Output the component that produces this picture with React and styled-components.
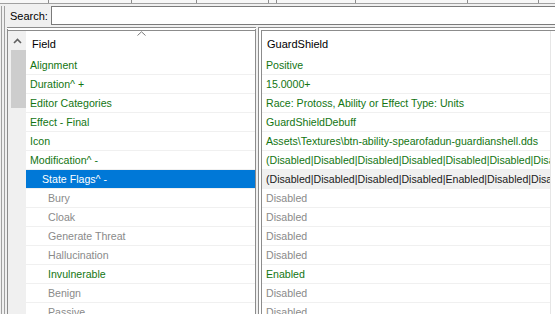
import React from "react";
import styled, { createGlobalStyle } from "styled-components";

const GlobalStyle = createGlobalStyle`
    html, body {
        margin: 0;
        padding: 0;
        background: #f0f0f0;
    }
`;

const Window = styled.div`
    width: 555px;
    height: 314px;
    overflow: hidden;
    background: #f0f0f0;
    font-family: "Liberation Sans", Arial, sans-serif;
    font-size: 10.6px;
    display: flex;
    flex-direction: column;
`;

const TopStrip = styled.div`
    height: 3px;
    flex: none;
    display: flex;
    border-bottom: 1px solid #a0a0a0;
    background: #f7f7f7;
`;

const TopCell = styled.div`
    width: ${(p) => p.w}px;
    flex: none;
    border-right: 1px solid #8c8c8c;
`;

const Frame = styled.div`
    flex: 1;
    margin-left: 1px;
    margin-top: 2px;
    border-left: 4px double #a0a0a0;
    display: flex;
    flex-direction: column;
    min-height: 0;
`;

const SearchRow = styled.div`
    height: 19px;
    flex: none;
    display: flex;
    align-items: center;
`;

const SearchLabel = styled.span`
    padding-left: 5px;
    width: 41px;
    flex: none;
    color: #000;
    font-size: 11px;
`;

const SearchInput = styled.div`
    flex: 1;
    height: 17px;
    margin-right: -4px;
    background: #fff;
    border: 1px solid #7a7a7a;
`;

const Panes = styled.div`
    flex: 1;
    display: flex;
    margin-top: 2px;
    min-height: 0;
    overflow: hidden;
`;

const LeftPane = styled.div`
    width: 247px;
    flex: none;
    margin-left: 2px;
    border-top: 4px double #8c8c8c;
    border-left: 1px solid #8c8c8c;
    border-right: 1px solid #8c8c8c;
    background: #fff;
    display: flex;
    overflow: hidden;
`;

const RightPane = styled.div`
    flex: 1;
    margin-left: 2px;
    border-top: 4px double #8c8c8c;
    border-left: 4px double #8c8c8c;
    background: #fff;
    display: flex;
    flex-direction: column;
    overflow: hidden;
`;

const ScrollBar = styled.div`
    width: 18px;
    flex: none;
    background: #f0f0f0;
    display: flex;
    flex-direction: column;
    align-items: center;
`;

const ScrollArrow = styled.div`
    height: 19px;
    flex: none;
    width: 100%;
    display: flex;
    align-items: center;
    justify-content: center;
`;

const Thumb = styled.div`
    width: 15px;
    height: 58px;
    flex: none;
    margin-left: 2px;
    background: #cdcdcd;
`;

const Tree = styled.div`
    flex: 1;
    display: flex;
    flex-direction: column;
    min-width: 0;
`;

const Header = styled.div`
    position: relative;
    height: 25px;
    flex: none;
    display: flex;
    align-items: center;
    padding-left: ${(p) => p.pad}px;
    color: #000;
    font-size: 11px;
`;

const SortMark = styled.svg`
    position: absolute;
    left: 111px;
    top: 0;
`;

const Row = styled.div`
    height: 18px;
    flex: none;
    border-bottom: 1px solid #f0f0f0;
    display: flex;
    align-items: center;
    white-space: nowrap;
    overflow: hidden;
    padding-left: ${(p) => p.indent}px;
    color: ${(p) => (p.selected ? "#fff" : p.tone === "green" ? "#127512" : p.tone === "gray" ? "#8a8a8a" : "#1a1a1a")};
    background: ${(p) => (p.selected ? "#0078d7" : "transparent")};
`;

const ValueList = styled.div`
    width: 288px;
    border-right: 1px solid #e6e6e6;
    display: flex;
    flex-direction: column;
    flex: 1;
`;

const ValueRow = styled(Row)`
    background: ${(p) => (p.current ? "#f0f0f0" : "transparent")};
`;

const rows = [
    { field: "Alignment", value: "Positive", tone: "green", indent: 4 },
    { field: "Duration^ +", value: "15.0000+", tone: "green", indent: 4 },
    { field: "Editor Categories", value: "Race: Protoss, Ability or Effect Type: Units", tone: "green", indent: 4 },
    { field: "Effect - Final", value: "GuardShieldDebuff", tone: "green", indent: 4 },
    { field: "Icon", value: "Assets\\Textures\\btn-ability-spearofadun-guardianshell.dds", tone: "green", indent: 4 },
    { field: "Modification^ -", value: "(Disabled|Disabled|Disabled|Disabled|Disabled|Disabled|Disa", tone: "green", indent: 4 },
    { field: "State Flags^ -", value: "(Disabled|Disabled|Disabled|Disabled|Enabled|Disabled|Disal", tone: "dark", indent: 16, selected: true },
    { field: "Bury", value: "Disabled", tone: "gray", indent: 22 },
    { field: "Cloak", value: "Disabled", tone: "gray", indent: 22 },
    { field: "Generate Threat", value: "Disabled", tone: "gray", indent: 22 },
    { field: "Hallucination", value: "Disabled", tone: "gray", indent: 22 },
    { field: "Invulnerable", value: "Enabled", tone: "green", indent: 22 },
    { field: "Benign", value: "Disabled", tone: "gray", indent: 22 },
    { field: "Passive", value: "Disabled", tone: "gray", indent: 22 },
];

const topCells = [48, 82, 64, 71, 7, 78, 111, 70];

function App() {
    return (
        <Window>
            <GlobalStyle />
            <TopStrip>
                {topCells.map((w, i) => <TopCell key={i} w={w} />)}
            </TopStrip>
            <Frame>
                <SearchRow>
                    <SearchLabel>Search:</SearchLabel>
                    <SearchInput />
                </SearchRow>
                <Panes>
                    <LeftPane>
                        <ScrollBar>
                            <ScrollArrow>
                                <svg width="9" height="6" viewBox="0 0 9 6">
                                    <path d="M1 5 L4.5 1.5 L8 5" fill="none" stroke="#606060" strokeWidth="1.6" />
                                </svg>
                            </ScrollArrow>
                            <Thumb />
                        </ScrollBar>
                        <Tree>
                            <Header pad={6}>
                                Field
                                <SortMark width="9" height="5" viewBox="0 0 9 5">
                                    <path d="M0.5 4.5 L4.5 0.8 L8.5 4.5" fill="none" stroke="#7a7a7a" strokeWidth="1" />
                                </SortMark>
                            </Header>
                            {rows.map((r) => (
                                <Row key={r.field} indent={r.indent} tone={r.tone} selected={r.selected}>
                                    {r.field}
                                </Row>
                            ))}
                        </Tree>
                    </LeftPane>
                    <RightPane>
                        <ValueList>
                            <Header pad={5}>GuardShield</Header>
                            {rows.map((r) => (
                                <ValueRow key={r.field} indent={4} tone={r.tone} current={r.selected}>
                                    {r.value}
                                </ValueRow>
                            ))}
                        </ValueList>
                    </RightPane>
                </Panes>
            </Frame>
        </Window>
    );
}

export default App;
